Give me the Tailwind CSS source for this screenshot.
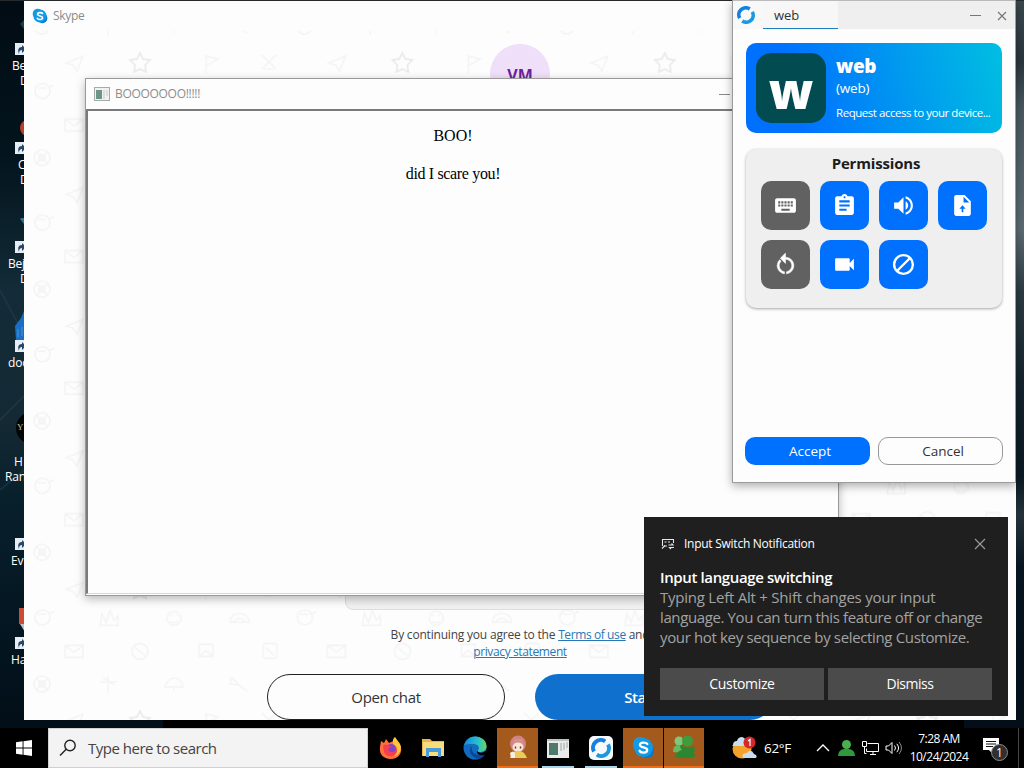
<!DOCTYPE html>
<html lang="en">
<head>
<meta charset="utf-8">
<title>Desktop</title>
<script src="https://cdn.jsdelivr.net/npm/@tailwindcss/browser@4"></script>
</head>
<body class="w-[1024px] h-[768px] overflow-hidden bg-[#04121a]">
<svg class="hidden">
  <symbol id="shortcut" viewBox="0 0 12 12"><rect width="12" height="12" fill="#e8edf3"/><path d="M4 11C2 6 4 4 7 4V2l4 4-4 4V7C5 7 4 8 4 11z" fill="#26466b"/></symbol>
  <symbol id="rust" viewBox="0 0 24 24"><path d="M17 4A9.300 9.300 0 0 0 3.600 16.200" fill="none" stroke="#1580e0" stroke-width="4.800"/><path d="M7 20A9.300 9.300 0 0 0 20.400 7.800" fill="none" stroke="#1b98e0" stroke-width="4.800"/></symbol>
  <symbol id="skype" viewBox="0 0 24 24"><circle cx="8.500" cy="8.500" r="7.500" fill="#1a9be0"/><circle cx="15.500" cy="15.500" r="7.500" fill="#0a78cc"/><circle cx="12" cy="12" r="9.800" fill="#0f9be6"/><path d="M16 8.400C15 6.500 8.300 6 8.300 9.300c0 3.200 7.600 1.900 7.600 5.300 0 3.500-7 3.300-8 .8" fill="none" stroke="#fff" stroke-width="2.400" stroke-linecap="round"/></symbol>
</svg>
<div class="relative w-[1024px] h-[768px] overflow-hidden font-['Open_Sans','Noto_Sans',sans-serif]">

  <!-- wallpaper -->
  <svg class="absolute inset-0" width="1024" height="768">
    <defs>
      <linearGradient id="wl" x1="0" y1="0" x2="0" y2="1"><stop offset="0" stop-color="#020c14"/><stop offset=".2" stop-color="#03141d"/><stop offset=".38" stop-color="#122c38"/><stop offset=".55" stop-color="#142934"/><stop offset=".65" stop-color="#08202c"/><stop offset=".8" stop-color="#041722"/><stop offset="1" stop-color="#010b14"/></linearGradient>
      <linearGradient id="wr" x1="0" y1="0" x2="0" y2="1"><stop offset="0" stop-color="#39484f"/><stop offset=".08" stop-color="#2a363d"/><stop offset=".14" stop-color="#485860"/><stop offset=".22" stop-color="#53636b"/><stop offset=".3" stop-color="#5c6a72"/><stop offset=".38" stop-color="#2c3b44"/><stop offset=".5" stop-color="#14232e"/><stop offset=".62" stop-color="#0a1924"/><stop offset=".67" stop-color="#25323b"/><stop offset=".74" stop-color="#061521"/><stop offset="1" stop-color="#020c16"/></linearGradient>
    </defs>
    <rect width="500" height="768" fill="url(#wl)"/>
    <rect x="500" width="524" height="768" fill="url(#wr)"/>
    <rect width="1024" height="1" fill="#262a2c"/>
    <path d="M0 290L24 335M0 420L24 396M0 490l24-20" stroke="#2a4a57" stroke-width="2" opacity=".35"/>
  </svg>

  <!-- desktop shortcuts -->
  <div class="absolute left-0 top-0 w-[24px] overflow-hidden text-white text-[12px] leading-[15px] tracking-[-0.2px] whitespace-nowrap">
    <div class="h-[99px] pt-[20px]"><svg width="24" height="37"><path d="M24 0l-4 4 4 5z" fill="#1d3f49"/><use href="#shortcut" x="15" y="23" width="12" height="12"/></svg><div class="mt-px pl-[12px]">Be</div><div class="pl-[20px]">D</div></div>
    <div class="h-[99px] pt-[20px]"><svg width="24" height="37"><circle cx="28" cy="9" r="8" fill="#b8402c"/><use href="#shortcut" x="15" y="23" width="12" height="12"/></svg><div class="mt-px pl-[18px]">C</div><div class="pl-[20px]">D</div></div>
    <div class="h-[99px] pt-[20px]"><svg width="24" height="37"><path d="M24 -3l-4 4 4 5z" fill="#24788a"/><use href="#shortcut" x="15" y="23" width="12" height="12"/></svg><div class="mt-px pl-[8px]">Bej</div><div class="pl-[20px]">D</div></div>
    <div class="h-[99px] pt-[10px]"><svg width="24" height="47"><path d="M24 4l-3 7-6 8 1 14h8z" fill="#1a6fc4"/><path d="M18 22v8M22 20v9" stroke="#4a95dc"/><use href="#shortcut" x="15" y="33" width="12" height="12"/></svg><div class="mt-px pl-[8px]">doc</div></div>
    <div class="h-[99px] pt-[10px]"><svg width="24" height="47"><circle cx="32" cy="22" r="16" fill="#020406"/><text x="17" y="24" font-size="9" fill="#b9c89a" font-family="Liberation Serif">Y</text></svg><div class="mt-px pl-[14px]">H</div><div class="pl-[5px]">Ran</div></div>
    <div class="h-[99px] pt-[20px]"><svg width="24" height="37"><use href="#shortcut" x="15" y="23" width="12" height="12"/></svg><div class="mt-px pl-[11px]">Ev</div></div>
    <div class="h-[99px] pt-[10px]"><svg width="24" height="47"><path d="M19 4h6v16h-6z" fill="#cf4a35"/><path d="M20 20h5v8z" fill="#b9c3c9"/><use href="#shortcut" x="15" y="33" width="12" height="12"/></svg><div class="mt-px pl-[11px]">Ha</div></div>
  </div>

  <!-- Skype window -->
  <section class="absolute left-[24px] top-px w-[992px] h-[719px] bg-[#fdfdfd] overflow-hidden">
    <svg class="absolute inset-0" width="992" height="719">
      <defs>
        <pattern id="doodles" x="0" y="8" width="262.400" height="131.600" patternUnits="userSpaceOnUse">
          <g fill="none" stroke="#f4f4f4" stroke-width="1.600">
            <circle cx="18" cy="17" r="8"/><circle cx="18" cy="17" r="3"/><path d="M12 11l12 12M24 11L12 23"/>
            <path d="M76 15h17M84 9v17M79 10l11 8"/>
            <path d="M141 20c4-12 16-12 18 0zM150 20v4"/>
            <path d="M207 10l8 8 8 6M207 10l-1 7 9 1"/>
            <path d="M42 54l17-7-6 15-4-6z"/>
            <path d="M116 44l3 6 7 1-5 5 1 7-6-3-6 3 1-7-5-5 7-1z" stroke="#e9e9e9"/>
            <path d="M182 65V47l12 3-11 6"/>
            <path d="M238 46l14 14M252 46l-14 14M240 60h10"/>
            <path d="M11 82c0-10 15-10 15 0s-15 10-15 0M26 78l4-2M14 79h8"/>
            <path d="M76 90l2-12 4 9 4-12 4 10 4-5v10z"/>
            <circle cx="150" cy="83" r="7"/><path d="M146 80h2M152 80h2M146 86q4 3 8 0"/>
            <path d="M206 87c0-12 19-12 19 0zM209 87q6-8 13 0"/>
            <path d="M41 110h18v12H41zM41 110l9 7 9-7"/>
            <circle cx="116" cy="116" r="8"/><path d="M111 112l10 8"/>
            <path d="M175 109h14v12h-14zM175 121l7-6 7 6"/>
            <rect x="239" y="108" width="14" height="15" rx="3"/><path d="M242 112l8 8"/>
          </g>
        </pattern>
      </defs>
      <rect y="30" width="992" height="689" fill="url(#doodles)"/>
    </svg>
    <header class="relative flex items-center gap-[5px] pl-[8px] pt-[6px]">
      <svg width="16" height="16"><use href="#skype"/></svg>
      <span class="text-[12px] leading-[17px] text-[#8c8c8c] tracking-[-0.3px]">Skype</span>
    </header>
    <div class="relative mx-auto mt-[20px] w-[60px] h-[60px] rounded-full bg-[#efdff8] flex items-center justify-center pt-[2px] text-[16px] font-bold text-[#6d1f9e]">VM</div>
    <div class="relative mx-auto mt-[445px] w-[350px] h-[61px] bg-[#f1f1f1] border border-[#dedede] rounded-[8px]"></div>
    <p class="relative mt-[16px] text-center text-[12px] leading-[17px] text-[#444] tracking-[-0.2px]">By continuing you agree to the <a class="text-[#2778b5] underline tracking-[-0.4px]">Terms of use</a> and<br><a class="text-[#2778b5] underline tracking-[-0.38px]">privacy statement</a></p>
    <div class="relative mt-[14px] flex justify-center gap-[30px] text-[15px]">
      <button class="w-[238px] h-[46px] rounded-full border border-[#222] bg-[#fdfdfd] text-[#333] tracking-[-0.35px]">Open chat</button>
      <button class="w-[238px] h-[46px] rounded-full bg-[#0f70ce] text-white font-semibold tracking-[-0.4px]">Start call</button>
    </div>
  </section>

  <!-- BOO window -->
  <section class="absolute left-[85px] top-[78px] w-[754px] h-[518px] bg-[#fdfdfd] border border-[#999] shadow-[0_3px_9px_rgba(0,0,0,0.28)] flex flex-col">
    <header class="h-[30px] shrink-0 flex items-center pl-[8px]">
      <svg width="16" height="14"><rect x=".5" y=".5" width="15" height="13" fill="#f0f2f2" stroke="#a5abab"/><rect x="2" y="3" width="6" height="9" fill="#6c9488"/><path d="M10 3v9M13 3v6" stroke="#c3c9c9"/></svg>
      <span class="ml-[5px] text-[12px] text-[#8c8c8c] tracking-[-0.3px]">BOOOOOOO!!!!!</span>
      <span class="ml-auto mr-[108px] w-[11px] h-px bg-[#888]"></span>
    </header>
    <main class="flex-1 mb-[1px] border-t-2 border-l-2 border-[#7a7a7a] border-b border-b-[#d8d8d8] text-center text-black text-[16px] leading-[19px] pt-[15px] pr-[20px] font-['Liberation_Serif',serif]">
      <p>BOO!</p>
      <p class="mt-[19px] tracking-[-0.35px]">did I scare you!</p>
    </main>
  </section>

  <!-- connection request window -->
  <section class="absolute left-[732px] top-0 w-[284px] h-[483px] bg-[#fdfdfd] border-x border-b border-[#9b9b9b] shadow-[0_3px_9px_rgba(0,0,0,0.32)] flex flex-col">
    <header class="h-[29px] shrink-0 bg-[#efefef] border-t border-[#bbb] flex items-center">
      <div class="h-full w-[30px] bg-[#f8f8f8] pl-[4px] pt-[5px]"><svg width="18" height="18"><use href="#rust"/></svg></div>
      <div class="h-full w-[75px] pl-[11px] pt-[4px] bg-[#f7f7f7] border-b border-[#1b7fc0] text-[13px] leading-[20px] text-[#333]">web</div>
      <svg class="ml-auto mr-[6px]" width="40" height="12" fill="none" stroke="#777"><path d="M1 6.500h11"/><path d="M29 3l8 8M37 3l-8 8" stroke-width="1.200"/></svg>
    </header>
    <div class="mx-[13px] mt-[14px] h-[90px] shrink-0 rounded-[10px] bg-linear-[75deg] from-[#0071ff] from-20% to-[#00bfe1] flex pl-[10px] pt-[10px]">
      <div class="w-[70px] h-[70px] rounded-[15px] bg-[#024b50] flex items-center justify-center text-white text-[49px] leading-[70px] font-extrabold pt-[3px]"><span>w</span></div>
      <div class="ml-[10px] text-white whitespace-nowrap">
        <div class="text-[19px] leading-[27px] font-extrabold tracking-[-0.4px]">web</div>
        <div class="text-[13.500px] leading-[16px] tracking-[-0.2px]">(web)</div>
        <div class="mt-[9px] text-[11.500px] leading-[16px] tracking-[-0.46px]">Request access to your device...</div>
      </div>
    </div>
    <div class="mx-[13px] mt-[16px] h-[159px] shrink-0 rounded-[10px] bg-[#efefef] shadow-[0_1px_3px_rgba(0,0,0,0.35)] px-[15px]">
      <h2 class="text-center text-[15px] leading-[20px] pt-[4px] pl-[4px] font-bold text-[#1c1c1c] tracking-[-0.16px]">Permissions</h2>
      <div class="mt-[8px] -mr-[2px] grid grid-cols-[repeat(4,49px)] gap-[10px] text-white">
        <div class="h-[49px] rounded-[10px] bg-[#616161] grid place-items-center"><svg width="25" height="25" viewBox="0 0 24 24" fill="currentColor"><path d="M20 5H4c-1.100 0-2 .9-2 2v10c0 1.100.9 2 2 2h16c1.100 0 2-.9 2-2V7c0-1.100-.9-2-2-2zm-9 3h2v2h-2V8zm0 3h2v2h-2v-2zM8 8h2v2H8V8zm0 3h2v2H8v-2zm-1 2H5v-2h2v2zm0-3H5V8h2v2zm9 7H8v-2h8v2zm0-4h-2v-2h2v2zm0-3h-2V8h2v2zm3 3h-2v-2h2v2zm0-3h-2V8h2v2z"/></svg></div>
        <div class="h-[49px] rounded-[10px] bg-[#0071ff] grid place-items-center"><svg width="25" height="25" viewBox="0 0 24 24" fill="currentColor"><path d="M19 3h-4.180C14.400 1.840 13.300 1 12 1s-2.400.84-2.820 2H5c-1.100 0-2 .9-2 2v14c0 1.100.9 2 2 2h14c1.100 0 2-.9 2-2V5c0-1.100-.9-2-2-2zm-7 0c.55 0 1 .45 1 1s-.45 1-1 1-1-.45-1-1 .45-1 1-1zm2 14H7v-2h7v2zm3-4H7v-2h10v2zm0-4H7V7h10v2z"/></svg></div>
        <div class="h-[49px] rounded-[10px] bg-[#0071ff] grid place-items-center"><svg width="25" height="25" viewBox="0 0 24 24" fill="currentColor"><path d="M3 9v6h4l5 5V4L7 9H3zm13.500 3c0-1.770-1.020-3.290-2.500-4.030v8.050c1.480-.73 2.500-2.250 2.500-4.020zM14 3.230v2.060c2.890.86 5 3.540 5 6.710s-2.110 5.850-5 6.710v2.060c4.010-.91 7-4.490 7-8.770s-2.990-7.860-7-8.770z"/></svg></div>
        <div class="h-[49px] rounded-[10px] bg-[#0071ff] grid place-items-center"><svg width="25" height="25" viewBox="0 0 24 24" fill="currentColor"><path d="M14 2H6c-1.100 0-2 .9-2 2v16c0 1.100.9 2 2 2h12c1.100 0 2-.9 2-2V8l-6-6zm-1.200 13v3.500h-1.600V15H9l3-3.200 3 3.200h-2.200zM13 9V3.500L18.500 9H13z"/></svg></div>
        <div class="h-[49px] rounded-[10px] bg-[#616161] grid place-items-center"><svg width="25" height="25" viewBox="0 0 24 24" fill="currentColor" stroke="currentColor" stroke-width=".5"><path d="M12 5V1L7 6l5 5V7c3.310 0 6 2.690 6 6 0 2.970-2.170 5.430-5 5.910v2.020c3.950-.49 7-3.850 7-7.930 0-4.420-3.580-8-8-8zm-6 8c0-1.650.67-3.150 1.760-4.240L6.340 7.340A8 8 0 0 0 4 13c0 4.080 3.050 7.440 7 7.930v-2.020c-2.830-.48-5-2.940-5-5.910z"/></svg></div>
        <div class="h-[49px] rounded-[10px] bg-[#0071ff] grid place-items-center"><svg width="25" height="25" viewBox="0 0 24 24" fill="currentColor"><path d="M17 10.500V7c0-.55-.45-1-1-1H4c-.55 0-1 .45-1 1v10c0 .55.45 1 1 1h12c.55 0 1-.45 1-1v-3.500l4 4v-11l-4 4z"/></svg></div>
        <div class="h-[49px] rounded-[10px] bg-[#0071ff] grid place-items-center"><svg width="25" height="25" viewBox="0 0 24 24" fill="none" stroke="currentColor" stroke-width="2.300"><circle cx="12" cy="12" r="9"/><path d="M5.500 18.500l13-13"/></svg></div>
      </div>
    </div>
    <div class="mt-[129px] mx-[12px] flex gap-[8px] text-[13.500px]">
      <button class="w-[125px] h-[28px] rounded-[10px] bg-[#0071ff] text-white pl-[5px]">Accept</button>
      <button class="w-[125px] h-[28px] rounded-[10px] border border-[#999] bg-[#fdfdfd] text-[#333] pl-[5px]">Cancel</button>
    </div>
  </section>

  <!-- toast -->
  <section class="absolute left-[644px] top-[517px] w-[364px] h-[199px] bg-[#1f1f1f] px-[16px] pt-[16px] text-white">
    <header class="flex items-center h-[21px]">
      <svg class="ml-[1px]" width="15" height="13" fill="none" stroke="#e6e6e6" stroke-width="1.100"><path d="M6 9H3M1.500 9V2.500h11V6M3.500 5h2M7 5h2"/><path d="M1 11.500l3-3M7.500 8h4.500l-1.500-1.500M13 10.500H8.500L10 12"/></svg>
      <span class="ml-[8px] text-[12px] tracking-[-0.26px] whitespace-nowrap">Input Switch Notification</span>
      <svg class="ml-auto mr-[6px]" width="12" height="12" stroke="#999" stroke-width="1.200"><path d="M1 1l10 10M11 1L1 11"/></svg>
    </header>
    <h3 class="mt-[13px] text-[15px] leading-[20px] font-semibold tracking-[-0.38px] whitespace-nowrap">Input language switching</h3>
    <div class="text-[15px] leading-[20px] text-[#a3a3a3] whitespace-nowrap"><p class="tracking-[-0.23px]">Typing Left Alt + Shift changes your input</p><p class="tracking-[-0.38px]">language. You can turn this feature off or change</p><p class="tracking-[-0.35px]">your hot key sequence by selecting Customize.</p></div>
    <div class="mt-[21px] grid grid-cols-2 gap-[4px] text-[14px]">
      <button class="h-[32px] bg-[#4b4b4b] tracking-[-0.35px] pb-px">Customize</button>
      <button class="h-[32px] bg-[#4b4b4b] tracking-[-0.45px] pb-px">Dismiss</button>
    </div>
  </section>

  <!-- taskbar -->
  <div class="absolute left-[163px] top-[720px] w-[801px] h-[8px] bg-black"></div>
  <footer class="absolute left-0 top-[728px] w-[1024px] h-[40px] bg-black flex items-center text-white">
    <div class="w-[48px] grid place-items-center"><svg width="16" height="16" fill="#fff"><path d="M0 2.300L6.600 1.300V7.600H0zM7.500 1.200L16 0v7.600H7.500zM0 8.500h6.600v6.300L0 13.800zM7.500 8.500H16V16l-8.500-1.200z"/></svg></div>
    <div class="w-[320px] h-[40px] bg-[#f3f3f3] border border-[#d0d0d0] flex items-center pl-[10px]">
      <svg width="18" height="18" fill="none" stroke="#222" stroke-width="1.400"><circle cx="11" cy="6.500" r="5.200"/><path d="M7.200 10.200L1 16.500"/></svg>
      <span class="ml-[11px] text-[15px] text-[#444] tracking-[-0.5px]">Type here to search</span>
    </div>
    <div class="ml-[2px] h-[40px] flex">
      <div class="w-[42px] grid place-items-center"><svg width="24" height="24" viewBox="0 0 24 24"><path d="M2 5l3 2 2-4 3 4 4-2 1-4 5 6c5 7 1 16-8 16C4 23 0 18 1 11z" fill="#ff7139"/><path d="M14 4l2-3 5 7c3 6-2 12-6 12 5-4 4-10-1-12z" fill="#ffc83a"/><circle cx="12" cy="13" r="5" fill="#8244c9"/><path d="M4 9c5-2 5 2 9 1-3 1-2 3-4 3 1 5 8 3 9 0 1 8-10 10-13 3z" fill="#f7404f"/></svg></div>
      <div class="w-[42px] grid place-items-center"><svg width="24" height="22" viewBox="0 0 24 22"><path d="M1 2h8l2 2h12v15H1z" fill="#e9b64b"/><path d="M2 5h21v14H2z" fill="#fbdc7b"/><path d="M5 11h15v9h-3v-5h-9v5H5z" fill="#4a9bd9"/></svg></div>
      <div class="w-[42px] grid place-items-center"><svg width="24" height="24" viewBox="0 0 24 24"><defs><linearGradient id="ed"><stop stop-color="#1389d8"/><stop offset=".6" stop-color="#27bfd0"/><stop offset="1" stop-color="#66d959"/></linearGradient></defs><circle cx="12" cy="12" r="11.500" fill="#126bbc"/><path d="M1 10C3 3 8 0 13 .5 20 1 24 6 23.500 11c-.5 5-8 6-9 4 3-3 1-7-4-7-4 0-8 0-9.500 2z" fill="url(#ed)"/><path d="M9 10c-2 7 5 11 12 8 1-.4 1 0 1 .5-1.500 2.500-4 4-6 4.500C8 22 4 14 9 10z" fill="#0c4796"/><path d="M14 15c3 3 7 2 9.500-1 0 2-1 4-2 5-5 1-8-1-7.500-4z" fill="#000"/></svg></div>
      <div class="w-[41px] ml-px bg-[#a45a1c] border-b-2 border-[#f36b12] grid place-items-center"><svg width="20" height="24" viewBox="0 0 20 24"><ellipse cx="10" cy="9" rx="8" ry="8.500" fill="#cf8383"/><ellipse cx="10" cy="12" rx="5.500" ry="4.500" fill="#fbe6d6"/><path d="M4 10q6-7 12 0l-2-6H6z" fill="#d98e8e"/><path d="M7.500 11.500v2M12.500 11.500v2" stroke="#5b3434" stroke-width="1.400"/><path d="M2 23q2-8 8-7 6-1 9 7z" fill="#edcb5b"/><path d="M2 18q3-3 5 0v5H3z" fill="#f2eee8"/></svg></div>
      <div class="w-[40px] px-[4px] flex flex-col"><div class="h-[38px] grid place-items-center"><svg class="mt-[2px]" width="22" height="19"><rect width="22" height="19" fill="#e9eceb"/><path d="M0 0h22v2H0z" fill="#bdc5c3"/><rect x="2" y="4" width="9" height="12" fill="#50796d"/><path d="M14 4v8M17 4v7M20 3v6" stroke="#9da3a2"/></svg></div><div class="h-[2px] bg-[#a8d4ee]"></div></div>
      <div class="ml-[2px] mr-[1px] w-[42px] px-[5px] flex flex-col"><div class="h-[38px] grid place-items-center"><div class="mt-[2px] w-[24px] h-[24px] rounded-[5px] bg-[#f6fafc] grid place-items-center"><svg width="20" height="20"><use href="#rust"/></svg></div></div><div class="h-[2px] bg-[#a8d4ee]"></div></div>
      <div class="w-[40px] bg-[#a45a1c] border-b-2 border-[#f36b12] grid place-items-center"><svg width="23" height="23"><use href="#skype"/></svg></div>
      <div class="ml-px w-[40px] bg-[#a45a1c] border-b-2 border-[#f36b12] grid place-items-center"><svg width="24" height="24" viewBox="0 0 24 24"><circle cx="7" cy="6" r="4.500" fill="#7fc77a"/><path d="M1 17q0-9 8-6l2 7z" fill="#68b764"/><circle cx="15.500" cy="6" r="5.500" fill="#3f9c3c"/><path d="M3 22q2-6 7-7-3-3-1-5 7 4 13 1 2 5-1 7 3 2 2 4-9 2-20 0z" fill="#2b8730"/></svg></div>
    </div>
    <svg class="ml-[27px]" width="26" height="24" viewBox="0 0 26 24"><circle cx="11" cy="13" r="9.500" fill="#f4a22b"/><path d="M2 9q0-4 4-4 1-4 5-4 4 1 4 5l-2 4H3q-3 0-1-1z" fill="#c6dff3"/><path d="M12 22q-2-5 4-5 4-5 7 1 4 1 2 4z" fill="#cbdcee"/><circle cx="18.500" cy="6.500" r="6" fill="#d3282c"/><path d="M17 5l2-1.500V10" stroke="#fff" stroke-width="1.200" fill="none"/></svg>
    <span class="ml-[7px] w-[30px] text-[13.500px] tracking-[-0.3px] whitespace-nowrap">62°F</span>
    <svg class="ml-[22px]" width="14" height="8" fill="none" stroke="#fff" stroke-width="1.300"><path d="M1 7l6-6 6 6"/></svg>
    <svg class="ml-[8px]" width="17" height="17"><circle cx="8.500" cy="4.500" r="4.500" fill="#4bae4f"/><path d="M0 16q0-6 6-7h5q6 1 6 7z" fill="#2f9a3a"/></svg>
    <svg class="ml-[7px]" width="17" height="15" fill="none" stroke="#fff"><path d="M5.500 2.500h11v8H4.500v-3M8 13.500h6M11 10.500v3M.5.500h4v5h-4zM2.500 5.500v7h2"/></svg>
    <svg class="ml-[6px]" width="17" height="14" fill="none" stroke="#fff"><path d="M1 5h2.500L7 1.500v11L3.500 9H1zM9.500 4.500q2 2.500 0 5M11.800 2.800q3.500 4.200 0 8.400"/><path d="M14 1q5 6 0 12" stroke="#888"/></svg>
    <div class="ml-[7px] w-[60px] text-center text-[12px] leading-[18px] tracking-[-0.5px] whitespace-nowrap"><div>7:28 AM</div><div>10/24/2024</div></div>
    <div class="relative ml-[14px] mt-[4px] w-[26px] h-[26px]">
      <svg width="17" height="18"><path d="M0 1h16v12h-5v5l-5-5H0z" fill="#fff"/><path d="M3 4.500h10M3 7h10M3 9.500h7" stroke="#111"/></svg>
      <span class="absolute left-[8px] top-[7px] w-[17px] h-[17px] rounded-full bg-[#303030] border border-[#8a8a8a] text-[12px] leading-[15px] text-center">1</span>
    </div>
    <span class="ml-auto mr-[5px] w-px h-[40px] bg-[#444]"></span>
  </footer>
</div>
</body>
</html>
